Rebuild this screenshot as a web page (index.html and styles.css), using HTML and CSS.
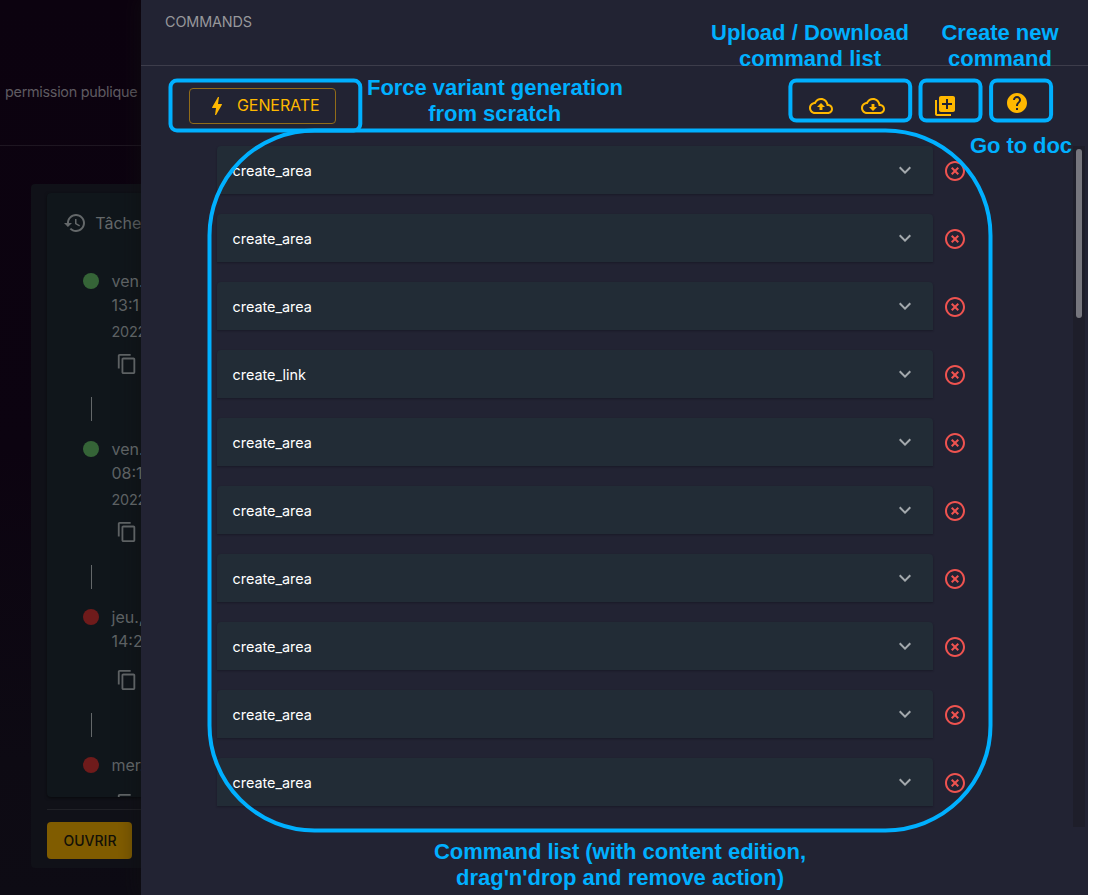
FILE: index.html
```
<!DOCTYPE html>
<html lang="fr">
<head>
<meta charset="utf-8">
<title>Commands</title>
<link rel="stylesheet" href="styles.css">
</head>
<body>
<svg class="sprite" width="0" height="0">
  <symbol id="history" viewBox="0 0 24 24"><path d="M13 3c-4.97 0-9 4.03-9 9H1l3.89 3.89.07.14L9 12H6c0-3.87 3.13-7 7-7s7 3.13 7 7-3.13 7-7 7c-1.93 0-3.68-.79-4.94-2.06l-1.42 1.42C8.27 19.99 10.51 21 13 21c4.97 0 9-4.03 9-9s-4.03-9-9-9zm-1 5v5l4.28 2.54.72-1.21-3.5-2.08V8H12z"/></symbol>
  <symbol id="copy" viewBox="0 0 24 24"><path d="M16 1H4c-1.1 0-2 .9-2 2v14h2V3h12V1zm3 4H8c-1.1 0-2 .9-2 2v14c0 1.1.9 2 2 2h11c1.1 0 2-.9 2-2V7c0-1.1-.9-2-2-2zm0 16H8V7h11v14z"/></symbol>
  <symbol id="bolt" viewBox="0 0 24 24"><path d="M11 21h-1l1-7H7.5c-.58 0-.57-.32-.38-.66.19-.34.05-.08.07-.12C8.48 10.94 10.42 7.54 13 3h1l-1 7h3.5c.49 0 .56.33.47.51l-.07.15C12.96 17.55 11 21 11 21z"/></symbol>
  <symbol id="upload" viewBox="0 0 24 24"><path d="M19.35 10.04C18.67 6.59 15.64 4 12 4 9.11 4 6.6 5.64 5.35 8.04 2.34 8.36 0 10.91 0 14c0 3.31 2.69 6 6 6h13c2.76 0 5-2.24 5-5 0-2.64-2.05-4.78-4.65-4.96zM19 18H6c-2.21 0-4-1.79-4-4 0-2.05 1.53-3.76 3.56-3.97l1.07-.11.5-.95C8.08 7.14 9.94 6 12 6c2.62 0 4.88 1.86 5.39 4.43l.3 1.5 1.53.11c1.56.1 2.78 1.41 2.78 2.96 0 1.65-1.35 3-3 3zM8 13h2.55v3h2.9v-3H16l-4-4z"/></symbol>
  <symbol id="download" viewBox="0 0 24 24"><path d="M19.35 10.04C18.67 6.59 15.64 4 12 4 9.11 4 6.6 5.64 5.35 8.04 2.34 8.36 0 10.91 0 14c0 3.31 2.69 6 6 6h13c2.76 0 5-2.24 5-5 0-2.64-2.05-4.78-4.65-4.96zM19 18H6c-2.21 0-4-1.79-4-4 0-2.05 1.53-3.76 3.56-3.97l1.07-.11.5-.95C8.08 7.14 9.94 6 12 6c2.62 0 4.88 1.86 5.39 4.43l.3 1.5 1.53.11c1.56.1 2.78 1.41 2.78 2.96 0 1.65-1.35 3-3 3zm-5.55-8h-2.9v3H8l4 4 4-4h-2.55z"/></symbol>
  <symbol id="add" viewBox="0 0 24 24"><path d="M4 6H2v14c0 1.1.9 2 2 2h14v-2H4V6zm16-4H8c-1.1 0-2 .9-2 2v12c0 1.1.9 2 2 2h12c1.1 0 2-.9 2-2V4c0-1.1-.9-2-2-2zm-1 9h-4v4h-2v-4H9V9h4V5h2v4h4v2z"/></symbol>
  <symbol id="help" viewBox="0 0 24 24"><path d="M12 2C6.48 2 2 6.48 2 12s4.48 10 10 10 10-4.48 10-10S17.52 2 12 2zm1 17h-2v-2h2v2zm2.07-7.75l-.9.92C13.45 12.9 13 13.5 13 15h-2v-.5c0-1.1.45-2.1 1.17-2.83l1.24-1.26c.37-.36.59-.86.59-1.41 0-1.1-.9-2-2-2s-2 .9-2 2H8c0-2.21 1.79-4 4-4s4 1.79 4 4c0 .88-.36 1.68-.93 2.25z"/></symbol>
  <symbol id="more" viewBox="0 0 24 24"><path d="M16.59 8.59L12 13.17 7.41 8.59 6 10l6 6 6-6z"/></symbol>
  <symbol id="remove" viewBox="0 0 24 24"><path d="M14.59 8L12 10.59 9.41 8 8 9.41 10.59 12 8 14.59 9.41 16 12 13.41 14.59 16 16 14.59 13.41 12 16 9.41 14.59 8zM12 2C6.47 2 2 6.47 2 12s4.47 10 10 10 10-4.47 10-10S17.53 2 12 2zm0 18c-4.41 0-8-3.59-8-8s3.59-8 8-8 8 3.59 8 8-3.59 8-8 8z"/></symbol>
</svg>
<div class="app">
  <aside class="study">
    <div class="study-head">permission publique</div>
    <div class="card">
      <div class="tasks">
        <div class="tasks-title"><svg class="history"><use href="#history"/></svg>Tâche</div>
        <div class="task"><i class="dot ok"></i><div class="when">ven.<br>13:1</div><div class="date">2022</div><svg class="copy"><use href="#copy"/></svg><i class="line"></i></div>
        <div class="task"><i class="dot ok"></i><div class="when">ven.<br>08:1</div><div class="date">2022</div><svg class="copy"><use href="#copy"/></svg><i class="line"></i></div>
        <div class="task short"><i class="dot ko"></i><div class="when">jeu.,<br>14:2</div><svg class="copy"><use href="#copy"/></svg><i class="line"></i></div>
        <div class="task last"><i class="dot ko"></i><div class="when">mer.</div><svg class="copy"><use href="#copy"/></svg></div>
      </div>
      <div class="card-foot"><button class="open">OUVRIR</button></div>
    </div>
  </aside>
  <main class="drawer">
    <header class="title">COMMANDS</header>
    <div class="toolbar">
      <button class="generate"><svg><use href="#bolt"/></svg><span>GENERATE</span></button>
      <div class="actions">
        <svg><use href="#upload"/></svg>
        <svg><use href="#download"/></svg>
        <svg class="add"><use href="#add"/></svg>
        <svg class="help"><use href="#help"/></svg>
      </div>
    </div>
    <div class="scroll">
      <div class="list">
        <div class="item"><div class="command"><span>create_area</span><svg><use href="#more"/></svg></div><svg class="remove"><use href="#remove"/></svg></div>
        <div class="item"><div class="command"><span>create_area</span><svg><use href="#more"/></svg></div><svg class="remove"><use href="#remove"/></svg></div>
        <div class="item"><div class="command"><span>create_area</span><svg><use href="#more"/></svg></div><svg class="remove"><use href="#remove"/></svg></div>
        <div class="item"><div class="command"><span>create_link</span><svg><use href="#more"/></svg></div><svg class="remove"><use href="#remove"/></svg></div>
        <div class="item"><div class="command"><span>create_area</span><svg><use href="#more"/></svg></div><svg class="remove"><use href="#remove"/></svg></div>
        <div class="item"><div class="command"><span>create_area</span><svg><use href="#more"/></svg></div><svg class="remove"><use href="#remove"/></svg></div>
        <div class="item"><div class="command"><span>create_area</span><svg><use href="#more"/></svg></div><svg class="remove"><use href="#remove"/></svg></div>
        <div class="item"><div class="command"><span>create_area</span><svg><use href="#more"/></svg></div><svg class="remove"><use href="#remove"/></svg></div>
        <div class="item"><div class="command"><span>create_area</span><svg><use href="#more"/></svg></div><svg class="remove"><use href="#remove"/></svg></div>
        <div class="item"><div class="command"><span>create_area</span><svg><use href="#more"/></svg></div><svg class="remove"><use href="#remove"/></svg></div>
      </div>
      <div class="track"><div class="thumb"></div></div>
    </div>
  </main>
  <svg class="notes" width="1088" height="895" viewBox="0 0 1088 895">
    <g class="frames">
      <rect x="170.5" y="80.4" width="189.8" height="50.2" rx="6.5"/>
      <rect x="790.4" y="80.4" width="119.8" height="40.2" rx="6"/>
      <rect x="920.5" y="80.4" width="60" height="40.2" rx="6"/>
      <rect x="991.1" y="80.4" width="60" height="40.2" rx="6"/>
      <rect x="209.5" y="130.4" width="781" height="700" rx="105"/>
    </g>
    <g class="labels">
      <text x="495" y="95" textLength="256">Force variant generation</text>
      <text x="494.7" y="121" textLength="133">from scratch</text>
      <text x="810" y="40" textLength="198">Upload / Download</text>
      <text x="810" y="66" textLength="142">command list</text>
      <text x="1000" y="40" textLength="117">Create new</text>
      <text x="1000" y="66" textLength="104">command</text>
      <text x="1021" y="153" textLength="102">Go to doc</text>
      <text x="620" y="859" textLength="372">Command list (with content edition,</text>
      <text x="620" y="885" textLength="328">drag'n'drop and remove action)</text>
    </g>
  </svg>
</div>
</body>
</html>
```
FILE: styles.css
```
* { box-sizing: border-box; }
body { margin: 0; background: #fff; font-family: Inter, "Liberation Sans", sans-serif; overflow: hidden; }
svg { width: 24px; height: 24px; fill: currentColor; flex: none; display: block; }
.sprite { position: absolute; width: 0; height: 0; }
.app { position: relative; display: flex; width: 1088px; height: 895px; overflow: hidden; }

.study { width: 141px; flex: none; overflow: hidden; background: linear-gradient(180deg, #0c020f 0%, #0c0310 50%, #0d0a13 85%, #0d0b14 100%); }
.study-head { height: 146px; border-bottom: 1px solid #1e1621; padding: 82px 0 0 5px; font-size: 14.4px; letter-spacing: -.28px; line-height: 20px; white-space: nowrap; color: #5f5b61; }
.card { margin: 38px 0 0 31px; width: 200px; height: 684px; background: #101118; border-radius: 4px; padding: 9px 0 0 16px; }
.tasks { height: 604px; overflow: hidden; background: #10161b; border-radius: 4px; box-shadow: 0 1px 3px rgba(0,0,0,.5); }
.tasks-title { display: flex; align-items: center; gap: 8px; height: 60px; padding-left: 17px; font-size: 16px; color: #64686a; }
.history { width: 24px; height: 24px; margin: 0 .5px 0 -1.2px; }
.task { height: 168px; padding: 16px 0 0 64.5px; display: grid; grid-template-rows: 49px 28px auto auto; align-content: start; position: relative; color: #5d6163; }
.when { font-size: 16px; line-height: 24px; white-space: nowrap; }
.date { font-size: 14.4px; letter-spacing: -.2px; line-height: 28px; }
.copy { width: 22px; height: 22px; margin: 7px 0 0 4.5px; grid-row: 3; }
.dot { position: absolute; left: 36px; top: 20px; width: 16px; height: 16px; border-radius: 50%; }
.ok { background: #356437; }
.ko { background: #6f1b1b; }
.line { position: absolute; left: 44px; bottom: 0; width: 1px; height: 24px; background: #64686a; }
.short { height: 148px; }
.short .copy { margin-top: -13px; }
.last { grid-template-rows: 25px 8px auto; }
.last .copy { margin-top: 7px; }
.card-foot { margin-top: 12px; border-top: 1px solid #202127; padding-top: 12px; }
.open { display: block; width: 85px; height: 37px; border: 0; border-radius: 4px; background: #805c00; color: #121008; font: 500 14px Inter, sans-serif; padding: 0 0 0 1px; }

.drawer { flex: 1; background: #222333; display: flex; flex-direction: column; box-shadow: 0 0 18px 4px rgba(15,15,15,.5); }
.title { height: 66px; border-bottom: 1px solid #3d3d4b; padding: 12px 24px; font-size: 14.4px; letter-spacing: -.12px; line-height: 20px; color: #97979b; }
.toolbar { display: flex; justify-content: space-between; align-items: flex-start; height: 80px; padding: 22px 59px 0 48px; color: #ffb800; }
.generate { display: flex; align-items: center; width: 147px; height: 36px; padding: 0 0 0 15px; border: 1px solid #916c19; border-radius: 4px; background: none; color: inherit; font: 16px Inter, sans-serif; }
.generate span { margin: 0 0 2px 8px; letter-spacing: -.08px; }
.actions { display: flex; padding-top: 6px; }
.actions svg { margin-right: 28px; }
.actions .add { margin: 0 48px 0 20px; }
.actions .help { margin: -3px 0 0; }
.scroll { display: flex; justify-content: space-between; height: 681px; padding-right: 3px; }
.list { width: 760px; margin-left: 76px; display: grid; grid-auto-rows: 48px; gap: 20px; align-content: start; }
.item { display: flex; align-items: center; gap: 10px; }
.command { width: 716px; height: 48px; display: flex; align-items: center; justify-content: space-between; padding: 0 16px 0 15.5px; background: #222c36; border-radius: 4px 4px 0 0; box-shadow: 0 1px 2px rgba(15,15,25,.45); color: #fff; font-size: 14.4px; line-height: 20px; }
.command span { padding-top: 2px; }
.command svg { color: #a4a9ad; }
.remove { color: #ef5350; margin-top: 2px; }
.track { width: 12px; background: #1e1e2a; padding: 3px 3px 0; }
.thumb { height: 169px; border-radius: 3px; background: #76767e; }

/* Callouts drawn over the interface */
.notes { position: absolute; left: 0; top: 0; width: 1088px; height: 895px; }
.frames { fill: none; stroke: #00b0ff; stroke-width: 4; }
.labels { fill: #00b0ff; font: bold 22px "Liberation Sans", Arial, sans-serif; text-anchor: middle; }
```
